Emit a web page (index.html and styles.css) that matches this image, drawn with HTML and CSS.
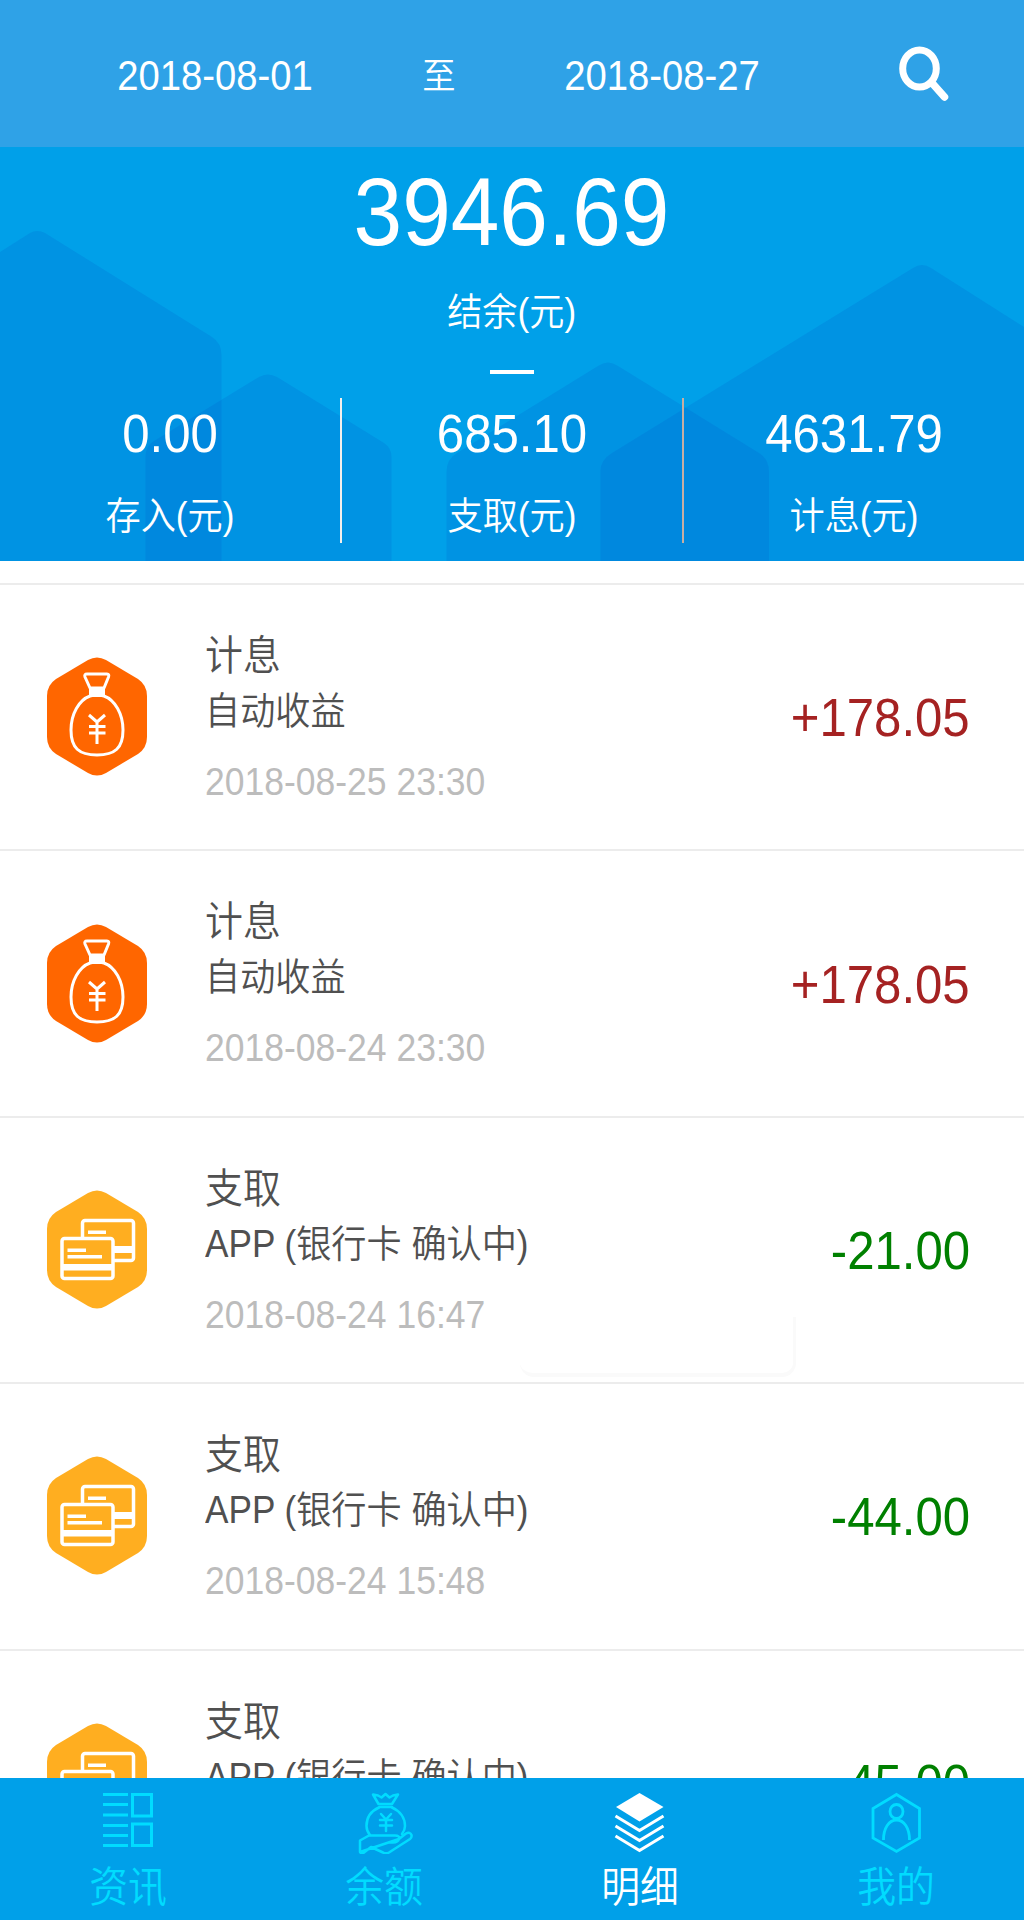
FILE: index.html
```html
<!DOCTYPE html>
<html lang="zh-CN">
<head>
  <meta charset="UTF-8" />
  <meta name="viewport" content="width=device-width, initial-scale=1.0"/>
  <title>明细</title>
  <link rel="stylesheet" href="styles.css">
</head>
<body>

<!-- Shared icons -->
<svg class="icon-defs" width="0" height="0">
  <symbol id="icon-bag" viewBox="0 0 100 120">
    <path d="M41 3Q50 -2 59 3L91 22Q100 28 100 39V80Q100 91 91 97L59 116Q50 121 41 116L9 97Q0 91 0 80V39Q0 28 9 22Z" fill="#ff6600"/>
    <g fill="none" stroke="#fff" stroke-width="3" stroke-linejoin="round">
      <path d="M40 17H60Q62.500 17 61.500 20L57 31H43L38 20Q37 17 40 17Z"/>
      <path d="M43 39C32 43 24 57 24 73C24 91 32 98 50 98C68 98 76 91 76 73C76 57 68 43 57 39Q50 37 43 39Z"/>
      <path d="M42 58L50 65L58 58M50 65V87M42 69.500H58.500M42 76H58.500"/>
    </g>
    <path d="M42 30H58V40H42Z" fill="#fff"/>
  </symbol>
  <symbol id="icon-card" viewBox="0 0 100 120">
    <path d="M41 3Q50 -2 59 3L91 22Q100 28 100 39V80Q100 91 91 97L59 116Q50 121 41 116L9 97Q0 91 0 80V39Q0 28 9 22Z" fill="#ffae20"/>
    <rect x="35.500" y="30.500" width="51" height="40" rx="2.500" fill="none" stroke="#fff" stroke-width="3.500"/>
    <path d="M67 56H86V63H67ZM41 40.500H59V44H41Z" fill="#fff"/>
    <rect x="15" y="48.500" width="51" height="40" rx="2.500" fill="#ffae20" stroke="#fff" stroke-width="3.500"/>
    <path d="M15 74H66V80.500H15ZM20.500 58.500H39V62H20.500ZM20.500 65H55V68.500H20.500Z" fill="#fff"/>
  </symbol>
</svg>

<!-- Date range -->
<div class="filter">
  <div class="date">2018-08-01</div>
  <div class="to">至</div>
  <div class="date date-end">2018-08-27</div>
  <svg class="search" viewBox="0 0 52 56">
    <ellipse cx="21.500" cy="22.500" rx="16.800" ry="18.500" fill="none" stroke="#fff" stroke-width="7"/>
    <path d="M34.500 37.500L46.500 51" stroke="#fff" stroke-width="7.500" stroke-linecap="round"/>
  </svg>
</div>

<!-- Summary -->
<div class="summary">
  <svg class="summary-bg" viewBox="0 0 1024 414">
    <g fill="#0060cc" fill-opacity="0.2">
      <path d="M0 105L30 86Q37 82 45 86L212 190Q221.500 196 221.500 208V414H0Z"/>
      <path d="M145.500 414V310Q145.500 299 154 294L259 230Q268 225 277 230L384 296Q391.500 301 391.500 310V414Z"/>
      <path d="M446.500 414V325Q446.500 312 457 306L598 219Q608 212 618 219L759 306Q769 312 769 325V414Z"/>
      <path d="M600.500 414V324Q600.500 313 612 306L913 121Q922 115 931 121L1024 180V414Z"/>
    </g>
  </svg>
  <div class="balance">3946.69</div>
  <div class="caption">结余(元)</div>
  <div class="dash"></div>
  <div class="stats">
    <div class="stat">
      <div class="stat-value">0.00</div>
      <div class="caption">存入(元)</div>
    </div>
    <div class="stat">
      <div class="stat-value">685.10</div>
      <div class="caption">支取(元)</div>
    </div>
    <div class="stat">
      <div class="stat-value">4631.79</div>
      <div class="caption">计息(元)</div>
    </div>
  </div>
</div>

<!-- Records -->
<div class="list">
  <div class="item">
    <svg class="item-icon"><use href="#icon-bag"/></svg>
    <div class="info">
      <div class="type">计息</div>
      <div class="desc">自动收益</div>
      <div class="time">2018-08-25 23:30</div>
    </div>
    <div class="amount income">+178.05</div>
  </div>
  <div class="item">
    <svg class="item-icon"><use href="#icon-bag"/></svg>
    <div class="info">
      <div class="type">计息</div>
      <div class="desc">自动收益</div>
      <div class="time">2018-08-24 23:30</div>
    </div>
    <div class="amount income">+178.05</div>
  </div>
  <div class="item">
    <svg class="item-icon"><use href="#icon-card"/></svg>
    <div class="info">
      <div class="type">支取</div>
      <div class="desc">APP (银行卡 确认中)</div>
      <div class="time">2018-08-24 16:47</div>
    </div>
    <div class="amount outgo">-21.00</div>
    <div class="ghost"></div>
  </div>
  <div class="item">
    <svg class="item-icon"><use href="#icon-card"/></svg>
    <div class="info">
      <div class="type">支取</div>
      <div class="desc">APP (银行卡 确认中)</div>
      <div class="time">2018-08-24 15:48</div>
    </div>
    <div class="amount outgo">-44.00</div>
  </div>
  <div class="item">
    <svg class="item-icon"><use href="#icon-card"/></svg>
    <div class="info">
      <div class="type">支取</div>
      <div class="desc">APP (银行卡 确认中)</div>
    </div>
    <div class="amount outgo">-45.00</div>
  </div>
</div>

<!-- Tab bar -->
<div class="tabs">
  <div class="tab">
    <svg class="tab-icon" viewBox="0 0 60 66" fill="none" stroke="currentColor" stroke-width="3">
      <path d="M5 6.500H30M5 16.500H30M5 27H30M5 37.500H30M5 47.500H30M5 57.500H30"/>
      <path d="M34.500 6.500H53.500V28H34.500ZM34.500 36H53.500V57.500H34.500Z"/>
    </svg>
    <div class="tab-label">资讯</div>
  </div>
  <div class="tab">
    <svg class="tab-icon" viewBox="0 0 60 66" fill="none" stroke="currentColor" stroke-width="2.500" stroke-linejoin="round" stroke-linecap="round">
      <path d="M24.500 16L19 6.500L24 7.500L27.500 9.500L31.500 6L35.500 9.500L39 7.500L44 6.500L38 16M25.500 16H38M25.500 19H38"/>
      <path d="M25 19.500C17 23 12.500 30 12.500 38Q12.500 43 16 47M38 19.500C46 23 51 30 51 38Q51 42 48 46"/>
      <path d="M27 26L32 31.500L37 26M32 31V43M26 32H38M26 37.500H38"/>
      <path d="M6 64V52.500L15 47.500H41Q46 47.500 45 51Q44 54.500 39 54.500H34.500M45 51L52 45.500Q56 43.500 57.500 47Q58 49.500 56 51L35 64.500Q32 66 29 64.500L17 59L10 64.500Q6.500 66 6 64Z"/>
    </svg>
    <div class="tab-label">余额</div>
  </div>
  <div class="tab active">
    <svg class="tab-icon" viewBox="0 0 60 66" fill="none" stroke="currentColor" stroke-width="3">
      <path d="M29.500 5L53.500 19L29.500 33.500L6 19Z" fill="currentColor" stroke="none"/>
      <path d="M5.500 28L29.500 42.500L53.500 28M5.500 38L29.500 52.500L53.500 38M5.500 48L29.500 62.500L53.500 48"/>
    </svg>
    <div class="tab-label">明细</div>
  </div>
  <div class="tab">
    <svg class="tab-icon" viewBox="0 0 60 66" fill="none" stroke="currentColor" stroke-width="2.800">
      <path d="M30.500 6.500L53.500 20.500V50L30.500 63.500L7 50V20.500Z"/>
      <ellipse cx="30.500" cy="23.500" rx="6.500" ry="7"/>
      <path d="M17.500 52C17.500 40 23 32 30.500 32C38 32 43.500 40 43.500 52"/>
    </svg>
    <div class="tab-label">我的</div>
  </div>
</div>

</body>
</html>
```

FILE: styles.css
```css
body {
  margin: 0;
  height: 1920px;
  overflow: hidden;
  display: flex;
  flex-direction: column;
  font-family: "Liberation Sans", "Noto Sans CJK SC DemiLight", "Noto Sans CJK SC", sans-serif;
  font-weight: 350;
  background: #fff;
  color: #505050;
}

.icon-defs {
  position: absolute;
}

/* narrow lettering */
.caption, .to, .type, .desc, .tab-label {
  transform: scaleX(0.925);
  white-space: nowrap;
}

.date, .balance, .stat-value, .time, .amount {
  transform: scaleX(0.91);
  white-space: nowrap;
}

.filter {
  flex: none;
  display: flex;
  align-items: center;
  height: 147px;
  background: #2fa2e7;
  color: #fff;
}

.date {
  width: 216px;
  margin-left: 107px;
  font-size: 42px;
  line-height: 50px;
  text-align: center;
  padding-top: 5px;
}

.date-end {
  margin-left: 96px;
}

.to {
  width: 38px;
  margin-left: 97px;
  padding-top: 6px;
  font-size: 36px;
  font-weight: 300;
  line-height: 50px;
  text-align: center;
}

.search {
  width: 52px;
  height: 56px;
  margin-left: 128px;
}

.summary {
  flex: none;
  position: relative;
  display: flex;
  flex-direction: column;
  align-items: center;
  height: 414px;
  background: #00a0e9;
  color: #fff;
}

.summary-bg {
  position: absolute;
  top: 0;
  left: 0;
  width: 1024px;
  height: 414px;
}

.balance {
  margin-top: 10px;
  font-size: 96px;
  line-height: 110px;
}

.caption {
  font-size: 38px;
  line-height: 50px;
}

.summary > .caption {
  margin-top: 20px;
}

.dash {
  width: 44px;
  height: 4px;
  margin-top: 33px;
  background: #fff;
}

.stats {
  position: relative;
  display: flex;
  align-self: stretch;
  height: 145px;
  margin-top: 24px;
}

.stat {
  flex: 1;
  text-align: center;
}

.stat + .stat {
  border-left: 2px solid #f3efec;
}

.stat:last-child {
  border-left-color: #c8aea2;
}

.stat-value {
  padding-top: 3px;
  font-size: 54px;
  line-height: 64px;
}

.stat .caption {
  margin-top: 26px;
}

.list {
  flex: 1;
  min-height: 0;
  margin-top: 22px;
  overflow: hidden;
  border-top: 2px solid #ececec;
}

.item {
  position: relative;
  display: flex;
  align-items: center;
  box-sizing: border-box;
  height: 266.400px;
  padding: 0 54px 0 47px;
  border-bottom: 2px solid #ececec;
}

.item-icon {
  width: 100px;
  height: 120px;
}

.info {
  flex: 1;
  align-self: flex-start;
  margin-left: 58px;
  padding-top: 43px;
}

.type, .desc, .time {
  transform-origin: left;
}

.type {
  font-size: 41px;
  line-height: 56px;
}

.desc {
  font-size: 38px;
  line-height: 54px;
}

.time {
  margin-top: 20px;
  font-size: 39px;
  line-height: 48px;
  color: #bcbcbc;
}

.amount {
  font-size: 54px;
  line-height: 64px;
  transform-origin: right;
}

.income {
  color: #a52222;
}

.outgo {
  color: #008000;
}

/* faint toast edge */
.ghost {
  position: absolute;
  left: 520px;
  bottom: 5px;
  width: 276px;
  height: 60px;
  border-right: 3px solid #fafafa;
  border-bottom: 4px solid #fafafa;
  border-radius: 0 0 14px 14px;
  box-sizing: border-box;
}

.tabs {
  flex: none;
  display: flex;
  height: 142px;
  background: #00a0e9;
}

.tab {
  flex: 1;
  display: flex;
  flex-direction: column;
  align-items: center;
  color: #00dcff;
}

.tab.active {
  color: #fff;
}

.tab-icon {
  width: 60px;
  height: 66px;
  margin-top: 10px;
}

.tab-label {
  margin-top: 7px;
  font-size: 42px;
  line-height: 54px;
}
```
